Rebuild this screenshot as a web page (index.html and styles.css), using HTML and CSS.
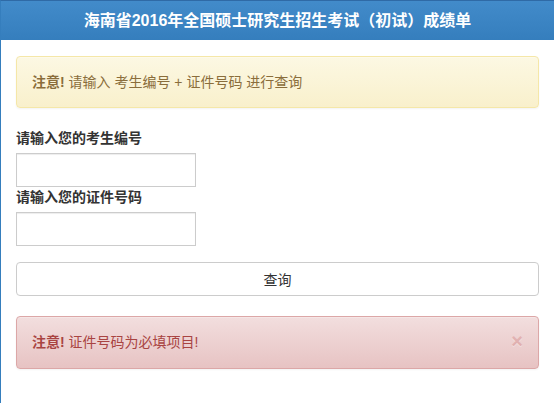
FILE: index.html
```html
<!DOCTYPE html>
<html lang="zh-CN">
<head>
  <meta charset="UTF-8" />
  <meta name="viewport" content="width=device-width, initial-scale=1.0"/>
  <title>成绩查询</title>
  <link rel="stylesheet" href="styles.css">
</head>
<body>
  <div class="panel">
    <div class="panel-heading">
      <h3 class="panel-title">海南省2016年全国硕士研究生招生考试（初试）成绩单</h3>
    </div>
    <div class="panel-body">
      <div class="alert alert-warning">
        <strong>注意!</strong> 请输入 考生编号 + 证件号码 进行查询
      </div>

      <form class="query-form" onsubmit="return false;">
        <label for="ksbh">请输入您的考生编号</label>
        <input type="text" id="ksbh">
        <label for="zjhm">请输入您的证件号码</label>
        <input type="text" id="zjhm">
        <button type="submit" class="btn">查询</button>
      </form>

      <div class="alert alert-danger">
        <span class="close">&times;</span>
        <strong>注意!</strong> 证件号码为必填项目!
      </div>
    </div>
  </div>
</body>
</html>
```

FILE: styles.css
```css
* {
  box-sizing: border-box;
}
body {
  margin: 0;
  font-family: "Liberation Sans", "Noto Sans CJK SC", sans-serif;
  font-size: 14px;
  line-height: 20px;
  color: #333;
  background: #fff;
  overflow: hidden;
}

.panel {
  border-left: 1px solid #357ebd;
  border-top: 1px solid #2f6aa6;
  min-height: 403px;
}

.panel-heading {
  background: linear-gradient(to bottom, #428bca 0, #357ebd 100%);
  color: #fff;
  height: 39px;
  display: flex;
  align-items: center;
  justify-content: center;
}

.panel-title {
  margin: 0;
  font-size: 16px;
  font-weight: bold;
}

.panel-body {
  padding: 16px 15px 15px 15px;
}

.alert {
  padding: 15px;
  border: 1px solid transparent;
  border-radius: 4px;
  margin-bottom: 20px;
  box-shadow: inset 0 1px 0 rgba(255, 255, 255, .25), 0 1px 2px rgba(0, 0, 0, .05);
}

.alert-warning {
  color: #8a6d3b;
  background: linear-gradient(to bottom, #fcf8e3 0, #f9f0cc 100%);
  border-color: #f5e7a8;
}

.alert-danger {
  color: #a94442;
  background: linear-gradient(to bottom, #f2dede 0, #e7c3c3 100%);
  border-color: #dca7a7;
  padding-right: 35px;
  height: 53px;
}

.alert strong {
  font-weight: bold;
}

.close {
  float: right;
  position: relative;
  right: -20px;
  top: -1px;
  font-size: 20px;
  font-weight: bold;
  color: #c77;
  opacity: .35;
  text-shadow: 0 1px 0 #fff;
}

.query-form {
  display: flex;
  flex-direction: column;
  align-items: flex-start;
}

.query-form label {
  font-weight: bold;
  margin-bottom: 5px;
  display: block;
}

.query-form input {
  width: 180px;
  height: 34px;
  padding: 6px 12px;
  border: 1px solid #ccc;
  border-radius: 0;
  font-size: 14px;
  box-shadow: inset 0 1px 1px rgba(0, 0, 0, .075);
}

.btn {
  width: 100%;
  height: 34px;
  margin-top: 16px;
  margin-bottom: 20px;
  background: #fff;
  border: 1px solid #ccc;
  border-radius: 4px;
  font-family: inherit;
  font-size: 14px;
  color: #333;
  cursor: pointer;
}

.btn:hover {
  background: #ebebeb;
}
```
